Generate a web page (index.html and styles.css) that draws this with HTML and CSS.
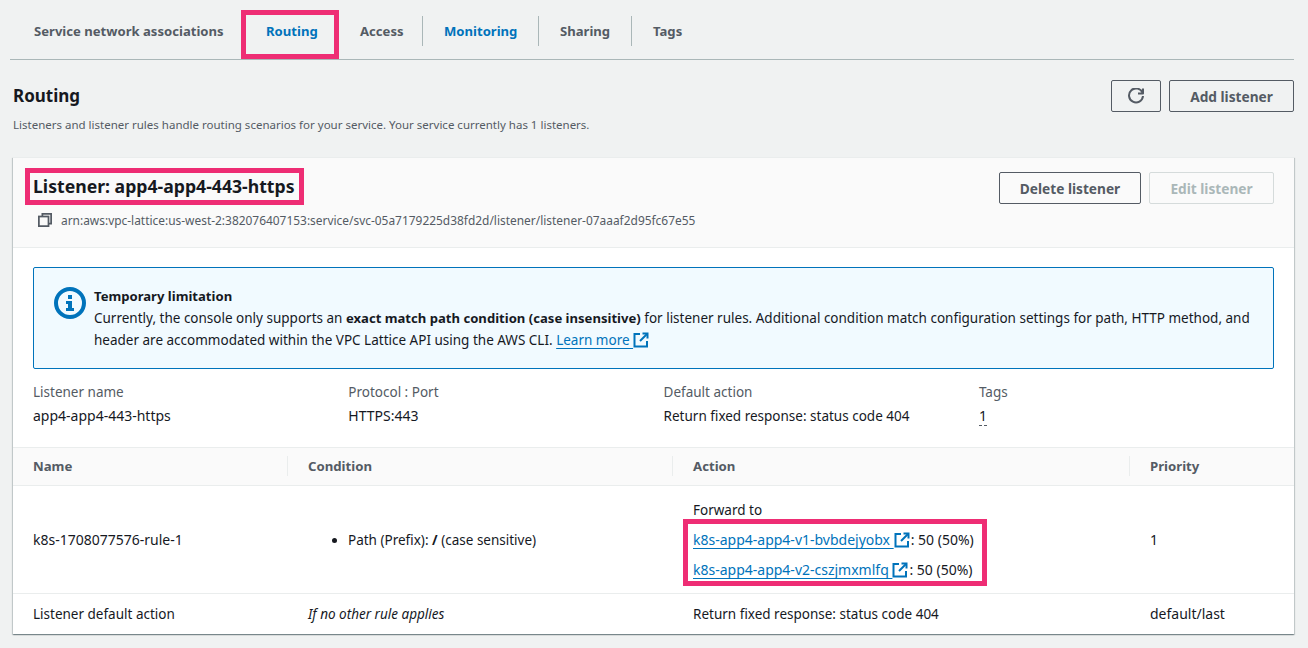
FILE: index.html
```html
<!DOCTYPE html>
<html lang="en">
  <head>
    <meta charset="UTF-8" />
    <title>Routing</title>
    <link rel="stylesheet" href="styles.css">
  </head>
  <body>
    <nav class="tabs">
      <a class="tab tab-service">Service network associations</a>
      <a class="tab tab-routing active marked">Routing</a>
      <a class="tab tab-access split">Access</a>
      <a class="tab tab-monitoring split active">Monitoring</a>
      <a class="tab tab-sharing split">Sharing</a>
      <a class="tab tab-tags">Tags</a>
    </nav>

    <header class="page-head">
      <div>
        <h2>Routing</h2>
        <p class="page-desc">Listeners and listener rules handle routing scenarios for your service. Your service currently has 1 listeners.</p>
      </div>
      <div class="actions">
        <button class="btn btn-icon" aria-label="Refresh">
          <svg width="16" height="16" viewBox="0 0 16 16" fill="none" stroke="#545b64" stroke-width="2"><path d="M14.6 5A7 7 0 1 0 15 8"/><path d="M15 .5V5.500H10" stroke-linejoin="round"/></svg>
        </button>
        <button class="btn btn-add">Add listener</button>
      </div>
    </header>

    <section class="card">
      <div class="card-head">
        <div class="head-left">
          <h3 class="marked listener-title">Listener: app4-app4-443-https</h3>
          <div class="arn">
            <svg width="14" height="14" viewBox="0 0 16 16" fill="none" stroke="#545b64" stroke-width="2"><path d="M5 4V1h10v11h-3"/><rect x="1" y="4" width="11" height="11"/></svg>
            <span>arn:aws:vpc-lattice:us-west-2:382076407153:service/svc-05a7179225d38fd2d/listener/listener-07aaaf2d95fc67e55</span>
          </div>
        </div>
        <div class="actions">
          <button class="btn btn-delete">Delete listener</button>
          <button class="btn btn-edit" disabled>Edit listener</button>
        </div>
      </div>

      <div class="card-body">
        <div class="alert">
          <svg class="alert-icon" width="32" height="32" viewBox="0 0 32 32"><circle cx="16" cy="16" r="14" fill="none" stroke="#0073bb" stroke-width="4"/><rect x="14" y="8" width="4" height="4" fill="#0073bb"/><path d="M12 14h6v7h2v3h-8v-3h2v-4h-2z" fill="#0073bb"/></svg>
          <div>
            <div class="alert-title">Temporary limitation</div>
            <p>Currently, the console only supports an <b>exact match path condition (case insensitive)</b> for listener rules. Additional condition match configuration settings for path, HTTP method, and header are accommodated within the VPC Lattice API using the AWS CLI. <a class="link" href="#">Learn more </a><svg class="ext" width="16" height="16" viewBox="0 0 16 16" fill="none" stroke="#0073bb" stroke-width="2"><path d="M7 2H1.500V14.500H14V9"/><path d="M9.500 1.500H14.500V6.500"/><path d="M14 2L7 9"/></svg></p>
          </div>
        </div>

        <div class="details">
          <div><div class="label">Listener name</div><div class="value digits">app4-app4-443-https</div></div>
          <div><div class="label">Protocol : Port</div><div class="value digits">HTTPS:443</div></div>
          <div><div class="label">Default action</div><div class="value">Return fixed response: status code 404</div></div>
          <div><div class="label">Tags</div><div class="value digits"><span class="dotted">1</span></div></div>
        </div>
      </div>

      <table class="rules">
        <thead>
          <tr>
            <th class="col-name"><span>Name</span></th>
            <th class="col-cond"><span>Condition</span></th>
            <th class="col-action"><span>Action</span></th>
            <th><span>Priority</span></th>
          </tr>
        </thead>
        <tbody>
          <tr>
            <td class="digits">k8s-1708077576-rule-1</td>
            <td>
              <ul class="conds"><li>Path (Prefix): <b>/</b> (case sensitive)</li></ul>
            </td>
            <td>
              <div class="forward">Forward to</div>
              <div class="targets marked">
                <div><a class="link" href="#">k8s-app4-app4-v1-bvbdejyobx </a><svg class="ext" width="16" height="16" viewBox="0 0 16 16" fill="none" stroke="#0073bb" stroke-width="2"><path d="M7 2H1.500V14.500H14V9"/><path d="M9.500 1.500H14.500V6.500"/><path d="M14 2L7 9"/></svg>: 50 (50%)</div>
                <div><a class="link" href="#">k8s-app4-app4-v2-cszjmxmlfq </a><svg class="ext" width="16" height="16" viewBox="0 0 16 16" fill="none" stroke="#0073bb" stroke-width="2"><path d="M7 2H1.500V14.500H14V9"/><path d="M9.500 1.500H14.500V6.500"/><path d="M14 2L7 9"/></svg>: 50 (50%)</div>
              </div>
            </td>
            <td class="digits">1</td>
          </tr>
          <tr>
            <td>Listener default action</td>
            <td><i>If no other rule applies</i></td>
            <td>Return fixed response: status code 404</td>
            <td class="digits">default/last</td>
          </tr>
        </tbody>
      </table>
    </section>
  </body>
</html>
```

FILE: styles.css
```css
* {
  margin: 0;
  padding: 0;
  box-sizing: border-box;
}

body {
  font-family: "Noto Sans", Arial, sans-serif;
  font-size: 13.500px;
  line-height: 22px;
  color: #16191f;
  background-color: #f0f2f2;
  padding: 0 14px 0 13px;
  height: 648px;
  overflow: hidden;
}

.marked {
  border: 5px solid #ee2d74;
}

.digits {
  font-size: 14px;
}

.tabs {
  display: flex;
  height: 60px;
  margin-left: -3px;
  padding-top: 10px;
  border-bottom: 1px solid #aab7b8;
}

.tab {
  display: flex;
  align-items: center;
  height: 49px;
  padding-left: 21px;
  padding-bottom: 7px;
  font-weight: 700;
  font-size: 13.100px;
  color: #545b64;
  white-space: nowrap;
}

.tab-service { width: 231px; padding-left: 24px; }
.tab-routing { width: 98px; padding-left: 20px; }
.tab-access { width: 84px; }
.tab-monitoring { width: 116px; }
.tab-sharing { width: 93px; }
.tab-tags { width: 62px; }

.tab.active {
  color: #0073bb;
}

.tab.split {
  position: relative;
}

.tab.split::after {
  content: "";
  position: absolute;
  right: 0;
  top: 6px;
  height: 30px;
  border-right: 1px solid #aab7b8;
}

.page-head {
  display: flex;
  justify-content: space-between;
  height: 97px;
  padding-top: 20px;
}

h2 {
  font-size: 17px;
  line-height: 31px;
}

.page-desc {
  font-size: 11.500px;
  line-height: 16px;
  color: #545b64;
  margin-top: 6px;
}

.actions {
  display: flex;
  gap: 8px;
}

.btn {
  height: 32px;
  font-family: inherit;
  font-size: 13.700px;
  font-weight: 700;
  color: #545b64;
  background-color: transparent;
  border: 1px solid #545b64;
  border-radius: 2px;
  display: flex;
  align-items: center;
  justify-content: center;
}

.btn-icon { width: 50px; }
.btn-add { width: 125px; }
.btn-delete { width: 142px; }
.btn-edit { width: 125px; color: #aab7b8; border-color: #d5dbdb; }

.card {
  background-color: #fff;
  border-top: 1px solid #eaeded;
  box-shadow: 0 1px 1px 0 rgba(0, 28, 36, 0.3), 1px 1px 1px 0 rgba(0, 28, 36, 0.15), -1px 1px 1px 0 rgba(0, 28, 36, 0.15);
  height: 477px;
}

.card-head {
  display: flex;
  justify-content: space-between;
  height: 90px;
  padding: 14px 20px 0 12px;
  background-color: #fafafa;
  border-bottom: 1px solid #eaeded;
}

.head-left {
  margin-top: -4px;
}

.listener-title {
  display: inline-block;
  font-size: 17.650px;
  line-height: 27px;
  padding: 0 3px;
  width: 279px;
  white-space: nowrap;
}

.arn {
  display: flex;
  align-items: center;
  gap: 9px;
  margin: 7px 0 0 13px;
  font-size: 11.930px;
  line-height: 16px;
  color: #545b64;
}

.card-body {
  padding: 19px 20px 0;
}

.alert {
  display: flex;
  gap: 8px;
  height: 102px;
  padding: 17px 20px 0 20px;
  background-color: #f1faff;
  border: 1px solid #0073bb;
  border-radius: 2px;
}

.alert-icon {
  flex: none;
  margin-top: 2px;
}

.alert-title {
  font-weight: 700;
  font-size: 13.100px;
}

.alert b {
  font-size: 13.100px;
}

.link {
  color: #0073bb;
  text-decoration: underline;
  text-underline-offset: 3px;
  white-space: pre;
}

.ext {
  vertical-align: -3px;
  margin-right: 1px;
}

.details {
  display: grid;
  grid-template-columns: repeat(4, 315.300px);
  height: 78px;
  padding-top: 12px;
}

.value {
  margin-top: 2px;
}

.label {
  color: #545b64;
}

.dotted {
  border-bottom: 1px dashed #545b64;
}

.rules {
  width: 100%;
  table-layout: fixed;
  border-collapse: collapse;
}

.col-name { width: 275px; }
.col-cond { width: 385px; }
.col-action { width: 457px; }

th {
  height: 38px;
  padding: 0 20px 2px;
  text-align: left;
  font-size: 13.200px;
  font-weight: 700;
  color: #545b64;
  background-color: #fafafa;
  border-top: 1px solid #eaeded;
  border-bottom: 1px solid #eaeded;
  position: relative;
}

th + th::before {
  content: "";
  position: absolute;
  left: -1px;
  top: 8px;
  height: 20px;
  border-left: 1px solid #eaeded;
}

td {
  padding: 0 20px;
  height: 40px;
  vertical-align: middle;
}

td.digits {
  font-size: 14px;
}

tbody tr:first-child td {
  height: 108px;
  border-bottom: 1px solid #eaeded;
}

.conds {
  margin-left: 40px;
}

.forward {
  margin-top: 6px;
}

.targets {
  width: 304px;
  margin: -2px 0 0 -10px;
  padding: 1px 5px 0;
  height: 67px;
  font-size: 14px;
  white-space: nowrap;
}

.targets > div {
  height: 30px;
  line-height: 30px;
}
```
